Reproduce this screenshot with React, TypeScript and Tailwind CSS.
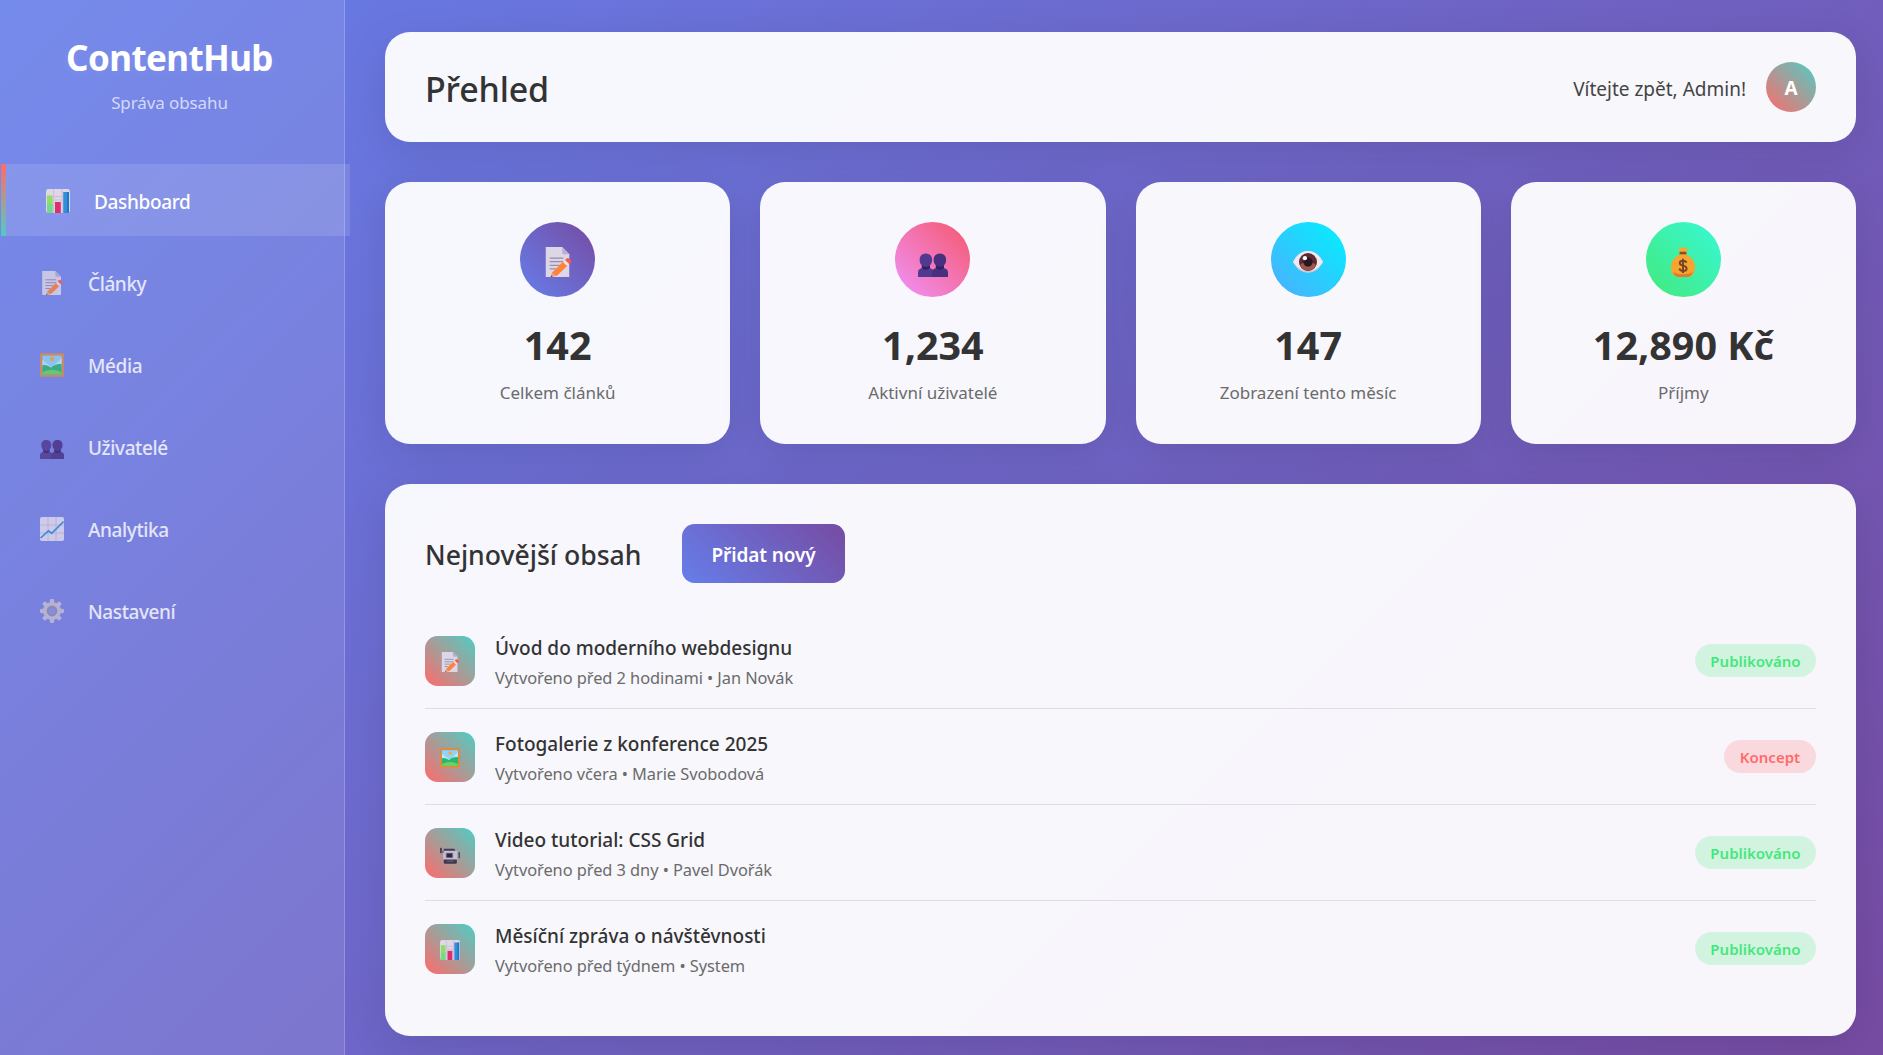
import type { ReactNode } from "react";

type IconProps = { className?: string };

function Glyph({ className, children }: IconProps & { children: ReactNode }) {
  return (
    <svg viewBox="0 0 24 24" className={className} aria-hidden="true">
      {children}
    </svg>
  );
}

function BarChartIcon({ className }: IconProps) {
  return (
    <Glyph className={className}>
      <rect x="0" y="0" width="24" height="24" rx="2.4" fill="#e0d6e6" />
      <path d="M7.7 0v24M16.2 0v24M8 7.6h8M8 11h8" stroke="#c4b8d0" strokeWidth="0.8" fill="none" />
      <path d="M1 6.4h5.6V24H2.4A1.4 1.4 0 0 1 1 22.6z" fill="#8fdf62" />
      <path d="M1 15h5.6v9H2.4A1.4 1.4 0 0 1 1 22.6z" fill="#6fdc8d" />
      <rect x="9" y="13" width="5.8" height="11" fill="#dc2f6d" />
      <path d="M17.2 3H23v19.6a1.4 1.4 0 0 1-1.4 1.4h-4.4z" fill="#2f8fdb" />
      <path d="M21 3h2v19.6a1.4 1.4 0 0 1-1.4 1.4H21z" fill="#1f78c4" />
    </Glyph>
  );
}

function MemoIcon({ className }: IconProps) {
  return (
    <Glyph className={className}>
      <path d="M2.2 0h13.2L21 5.8V24H2.2z" fill="#dcd6e6" />
      <path d="M15.4 0 21 5.8h-4.4a1.2 1.2 0 0 1-1.2-1.2z" fill="#b9aed0" />
      <path d="M5.4 8.8h10.8M5.4 11.7h12M5.4 14.6h8M5.4 17.5h5" stroke="#978da6" strokeWidth="1" fill="none" />
      <path d="m7.4 20.4 9-9 3.3 3.3-8.4 8.1-5 1.2z" fill="#ff8236" />
      <path d="m15.9 11.9 1.7-1.6 3.2 3.3-1.6 1.6z" fill="#eee3ea" />
      <path d="m17.6 10.3 1.1-1c.7-.7 1.6-.7 2.3 0l1.1 1.1c.7.7.7 1.5 0 2.2l-1.2 1z" fill="#fb5a49" />
      <path d="m7.3 20.5 3.6 2.4-4.7 1.1z" fill="#e9a27d" />
      <path d="m6.5 22.7 1.1.9-1.5.4z" fill="#402a4c" />
    </Glyph>
  );
}

function PictureIcon({ className }: IconProps) {
  return (
    <Glyph className={className}>
      <rect x="0" y="0.3" width="24" height="23.4" rx="1.2" fill="#dc8c42" />
      <rect x="2.4" y="2.6" width="19.2" height="18.8" fill="#8fd3f7" />
      <path d="m2.4 6.8 9.6 8L21.6 5v9H2.4z" fill="#bfe7fa" />
      <circle cx="12.2" cy="6" r="2.2" fill="#f2ab35" />
      <path d="M2.4 12.5c3.2-1.2 5.7.3 8.5 2.2 3-3 6.500-4.200 10.700-3.700v10.400H2.400z" fill="#2db66b" />
      <path d="M2.4 19.4c6-3.5 13-3.5 19.2 0v2H2.4z" fill="#69d45f" />
    </Glyph>
  );
}

function PeopleIcon({ className }: IconProps) {
  return (
    <Glyph className={className}>
      <path d="M6.3 5.1c3 0 5 2 5 4.9 0 2.1-.6 3.600-1.800 4.600v2.200c1.800.600 3.100 1.600 3.100 3.500V24H0v-3.700c0-2 1.300-2.900 3.100-3.500v-2.200C1.900 13.600 1.300 12.100 1.300 10c0-2.900 2-4.900 5-4.900z" fill="#51398f" />
      <path d="M17.5 5.1c3 0 5 2 5 4.900 0 2.100-.600 3.600-1.800 4.600v2.200c2 .600 3.300 1.500 3.300 3.500V24H11.400v-3.700c0-2 1.100-2.900 2.900-3.500v-2.200c-1.200-1-1.800-2.500-1.800-4.600 0-2.900 2-4.900 5-4.900z" fill="#482f80" />
      <path d="M3.1 14.6c1.8 1.7 4.6 1.7 6.4 0v2.2c-2 1.8-4.4 1.8-6.4 0zM14.3 14.6c1.8 1.7 4.6 1.7 6.4 0v2.2c-2 1.8-4.4 1.8-6.4 0z" fill="#35205f" />
    </Glyph>
  );
}

function LineChartIcon({ className }: IconProps) {
  return (
    <Glyph className={className}>
      <rect x="0" y="0" width="24" height="24" rx="1.8" fill="#e4dcec" />
      <path d="M8 0v24M16 0v24M0 8h24M0 16h24" stroke="#c6bcd6" strokeWidth="0.9" fill="none" />
      <path d="m.6 21 7.8-7.2 3.3 2.5L23.6 4.500" stroke="#2c8fdc" strokeWidth="1.700" fill="none" />
    </Glyph>
  );
}

function GearIcon({ className }: IconProps) {
  return (
    <Glyph className={className}>
      <g fill="#c6bfd2">
        <rect x="9.8" y="0" width="4.4" height="24" rx="1.4" />
        <rect x="9.8" y="0" width="4.4" height="24" rx="1.4" transform="rotate(45 12 12)" />
        <rect x="9.8" y="0" width="4.4" height="24" rx="1.4" transform="rotate(90 12 12)" />
        <rect x="9.8" y="0" width="4.4" height="24" rx="1.4" transform="rotate(135 12 12)" />
        <circle cx="12" cy="12" r="9" />
      </g>
      <circle cx="12" cy="12" r="5.400" fill="#938bab" />
      <circle cx="12" cy="12" r="3.600" fill="#8a90dc" />
    </Glyph>
  );
}

function EyeIcon({ className }: IconProps) {
  return (
    <Glyph className={className}>
      <path d="M0 12C3.2 5.9 7.3 3.2 12 3.2S20.8 5.9 24 12c-3.2 5.9-7.3 8.6-12 8.6S3.2 17.9 0 12z" fill="#d9c6d2" />
      <path d="M0 12C3.2 5.9 7.3 3.2 12 3.2S20.8 5.9 24 12c-3.2 4.8-7.3 7.2-12 7.2S3.2 16.8 0 12z" fill="#f1e8ee" />
      <circle cx="12" cy="12" r="7.2" fill="#5d2936" />
      <path d="M5.6 14.8a7.2 7.2 0 0 0 12.8 0C17 11 7 11 5.6 14.8z" fill="#98594f" />
      <circle cx="12" cy="12" r="3.7" fill="#29161f" />
      <circle cx="9.500" cy="8.900" r="1.700" fill="#ffffff" />
    </Glyph>
  );
}

function MoneyBagIcon({ className }: IconProps) {
  return (
    <Glyph className={className}>
      <path d="M8.7.8c1-.8 2-.1 3.3-.1s2.300-.700 3.300.100c.500.500.200 1.400-.200 2.100l-.700 1.500H9.600l-.700-1.500C8.500 2.200 8.200 1.300 8.700.800z" fill="#f8a72e" />
      <rect x="9.2" y="3.7" width="5.6" height="2.4" rx="0.8" fill="#86502a" />
      <path d="M9.4 6h5.2c4.300 2 7 5.600 7 10.100 0 5.200-2.500 7.900-6 7.900H8.400c-3.500 0-6-2.700-6-7.900C2.400 11.600 5.100 8 9.400 6z" fill="#f7a531" />
      <path d="M4 20c4.500 2.400 11.500 2.400 16 0-.900 2.700-2.500 4-4.700 4H8.700c-2.200 0-3.800-1.300-4.700-4z" fill="#df7c2c" />
      <path d="M12 9.300v11.400M14.700 12.600c-.300-1.200-1.300-1.700-2.700-1.700-1.600 0-2.600.700-2.600 1.900 0 2.900 5.500 1.300 5.500 4.300 0 1.300-1.200 2-2.800 2-1.700 0-2.700-.700-3-1.900" stroke="#7b4326" strokeWidth="1.600" fill="none" />
    </Glyph>
  );
}

function CameraIcon({ className }: IconProps) {
  return (
    <Glyph className={className}>
      <path d="M4.500 5.600h12.700l1.600 3.200H4.500z" fill="#433b56" />
      <rect x="3.8" y="8" width="17" height="11" rx="1.4" fill="#c5bfd0" />
      <rect x="0" y="4.5" width="2.2" height="6.5" rx="0.8" fill="#453d59" />
      <path d="M1.5 8.5h3v2.3h-3z" fill="#6c6580" />
      <path d="m20.8 11.5 1.5-1V18l-1.5-1z" fill="#a59db4" />
      <rect x="22.2" y="9.5" width="1.8" height="7.5" rx="0.7" fill="#50475e" />
      <rect x="6.8" y="10.6" width="9" height="6.2" rx="0.6" fill="#8f879e" />
      <rect x="8" y="11.3" width="6.8" height="4.8" fill="#302842" />
      <path d="M4.500 18.500h15.700v3.700a1.500 1.500 0 0 1-1.500 1.500H6a1.500 1.500 0 0 1-1.500-1.500z" fill="#40384f" />
      <path d="M8.5 20.5h8" stroke="#6d6580" strokeWidth="1.2" />
    </Glyph>
  );
}

const navItems = [
  { label: "Články", Icon: MemoIcon },
  { label: "Média", Icon: PictureIcon },
  { label: "Uživatelé", Icon: PeopleIcon },
  { label: "Analytika", Icon: LineChartIcon },
  { label: "Nastavení", Icon: GearIcon },
];

const stats = [
  { value: "142", label: "Celkem článků", Icon: MemoIcon, tone: "bg-[linear-gradient(45deg,#667eea,#764ba2)]" },
  { value: "1,234", label: "Aktivní uživatelé", Icon: PeopleIcon, tone: "bg-[linear-gradient(45deg,#f093fb,#f5576c)]" },
  { value: "147", label: "Zobrazení tento měsíc", Icon: EyeIcon, tone: "bg-[linear-gradient(45deg,#4facfe,#00f2fe)]" },
  { value: "12,890 Kč", label: "Příjmy", Icon: MoneyBagIcon, tone: "bg-[linear-gradient(45deg,#43e97b,#38f9d7)]" },
];

const posts = [
  { title: "Úvod do moderního webdesignu", meta: "Vytvořeno před 2 hodinami • Jan Novák", Icon: MemoIcon, published: true },
  { title: "Fotogalerie z konference 2025", meta: "Vytvořeno včera • Marie Svobodová", Icon: PictureIcon, published: false },
  { title: "Video tutorial: CSS Grid", meta: "Vytvořeno před 3 dny • Pavel Dvořák", Icon: CameraIcon, published: true },
  { title: "Měsíční zpráva o návštěvnosti", meta: "Vytvořeno před týdnem • System", Icon: BarChartIcon, published: true },
];

const panel = "rounded-[25px] bg-white/95 shadow-[0_10px_40px_rgba(0,0,0,0.1)]";

function Sidebar() {
  return (
    <aside className="relative z-10 h-full w-[345px] shrink-0 border-r border-white/20 bg-white/10">
      <div className="pt-[34px] pr-[5px] text-center">
        <h1 className="text-[35px] leading-[48px] font-bold tracking-[-0.6px] text-white [text-shadow:0_2px_10px_rgba(255,255,255,0.08)]">
          ContentHub
        </h1>
        <p className="mt-[9px] text-[17px] leading-6 tracking-[-0.1px] text-white/70">Správa obsahu</p>
      </div>
      <nav className="mt-[49px] flex flex-col gap-[10px]">
        <a className="relative ml-px flex h-[72px] w-[349px] items-center bg-white/[0.12] pl-[45px] text-white">
          <span className="absolute inset-y-0 left-0 w-[5px] bg-[linear-gradient(180deg,#ff6b6b,#4ecdc4)]" />
          <BarChartIcon className="relative top-[1px] size-6" />
          <span className="ml-[24px] pt-[3px] text-[19px] leading-[26px] font-medium tracking-[-0.35px]">Dashboard</span>
        </a>
        {navItems.map(({ label, Icon }) => (
          <a key={label} className="flex h-[72px] items-center pl-[40px] text-white/80">
            <Icon className="relative top-[1px] size-6 opacity-80" />
            <span className="ml-[24px] pt-[3px] text-[19px] leading-[26px] font-medium tracking-[-0.4px]">{label}</span>
          </a>
        ))}
      </nav>
    </aside>
  );
}

export default function App() {
  return (
    <div className="flex h-[1055px] w-full overflow-hidden bg-[linear-gradient(135deg,#667eea_0%,#764ba2_100%)] font-['Noto_Sans',sans-serif] text-[#333]">
      <Sidebar />
      <main className="min-w-0 flex-1 pt-8 pr-[27px] pl-[40px]">
        <header className={`flex h-[110px] items-center justify-between px-[40px] ${panel}`}>
          <h2 className="pt-[3px] text-[34px] leading-[44px] font-medium tracking-[-0.15px]">Přehled</h2>
          <div className="flex items-center gap-5">
            <span className="pt-[3px] text-[19px] leading-[26px] text-[#444]">Vítejte zpět, Admin!</span>
            <span className="flex size-[50px] items-center justify-center rounded-full bg-[linear-gradient(45deg,#ff6b6b,#4ecdc4)] pt-[3px] text-[19px] font-bold text-white">
              A
            </span>
          </div>
        </header>

        <section className="mt-[40px] grid grid-cols-4 gap-[30px]">
          {stats.map(({ value, label, Icon, tone }) => (
            <div key={label} className={`flex h-[262px] flex-col items-center pt-[40px] ${panel}`}>
              <span className={`flex size-[75px] items-center justify-center rounded-full pt-[4px] ${tone}`}>
                <Icon className="size-[30px]" />
              </span>
              <strong className="mt-[21px] text-[39.5px] leading-[54px] font-bold">{value}</strong>
              <span className="mt-[9px] text-[17px] leading-6 text-[#6b6b6b]">{label}</span>
            </div>
          ))}
        </section>

        <section className={`mt-[40px] h-[552px] px-[40px] pt-[40px] ${panel}`}>
          <div className="flex h-[59px] items-center">
            <h3 className="w-[257px] pt-[3px] text-[26.6px] leading-9 font-medium whitespace-nowrap">Nejnovější obsah</h3>
            <button className="h-[59px] w-[163px] rounded-[12.5px] bg-[linear-gradient(45deg,#667eea,#764ba2)] pt-[3px] text-[19px] font-semibold tracking-[-0.1px] text-white">
              Přidat nový
            </button>
          </div>
          <ul className="mt-[30px]">
            {posts.map(({ title, meta, Icon, published }) => (
              <li key={title} className="flex h-24 items-center border-b border-black/10 last:border-b-transparent">
                <span className="flex size-[50px] items-center justify-center rounded-[12.5px] bg-[linear-gradient(45deg,#ff6b6b,#4ecdc4)] pt-[2px]">
                  <Icon className="size-5" />
                </span>
                <div className="ml-5 flex-1 pt-[4px]">
                  <h4 className="text-[19px] leading-[30px] font-medium">{title}</h4>
                  <p className="text-[16.4px] leading-[30px] tracking-[-0.06px] text-[#6b6b6b]">{meta}</p>
                </div>
                {published ? (
                  <span className="flex h-[33px] w-[121px] items-center justify-center rounded-full bg-[#43e97b]/20 pt-[2px] text-[15px] font-semibold text-[#43e97b]">
                    Publikováno
                  </span>
                ) : (
                  <span className="flex h-[33px] w-[92px] items-center justify-center rounded-full bg-[#ff6b6b]/20 pt-[2px] text-[15px] font-semibold text-[#ff6b6b]">
                    Koncept
                  </span>
                )}
              </li>
            ))}
          </ul>
        </section>
      </main>
    </div>
  );
}
